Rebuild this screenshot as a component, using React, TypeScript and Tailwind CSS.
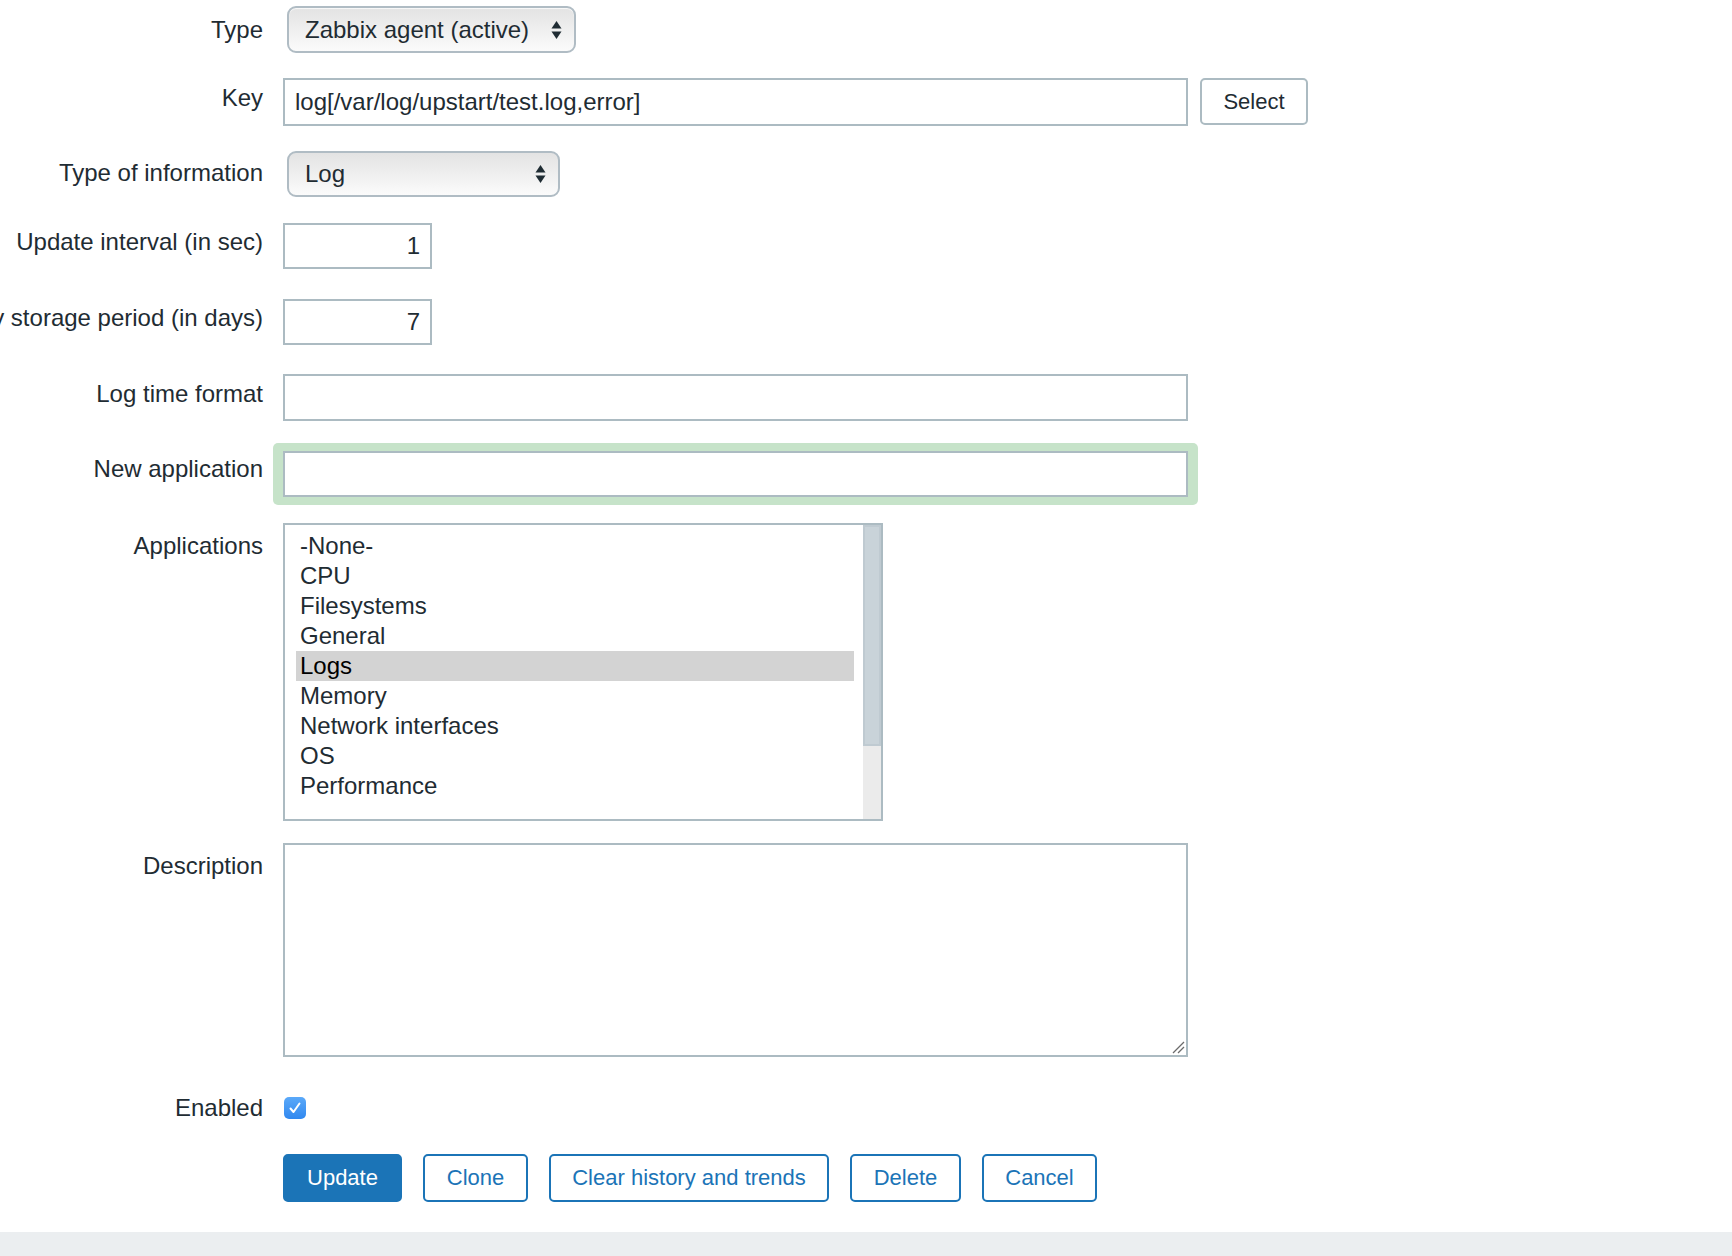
import React from "react";

const Arrows = () => (
  <svg width="11" height="20" viewBox="0 0 11 20" className="shrink-0">
    <path d="M5.5 1 L10.5 8.5 H0.5 Z" fill="#1f2c33" />
    <path d="M5.5 19 L10.5 11.5 H0.5 Z" fill="#1f2c33" />
  </svg>
);

function Row({
  label,
  lp,
  className,
  children,
}: {
  label: string;
  lp: string;
  className: string;
  children: React.ReactNode;
}) {
  return (
    <div className={`flex items-start ${className}`}>
      <div className={`w-[263px] shrink-0 flex justify-end ${lp}`}>
        <span className="whitespace-nowrap text-[24px] leading-[28px]">{label}</span>
      </div>
      <div className="ml-[20px] flex items-start">{children}</div>
    </div>
  );
}

const apps = [
  "-None-",
  "CPU",
  "Filesystems",
  "General",
  "Logs",
  "Memory",
  "Network interfaces",
  "OS",
  "Performance",
];

export default function App() {
  return (
    <div className="min-h-screen flex flex-col bg-white text-[#1f2c33] font-['Liberation_Sans',Arial,sans-serif] overflow-hidden">
      <div className="flex flex-col pt-[6px]">
        <Row label="Type" lp="pt-[10px]" className="">
          <div className="ml-[4px] w-[289px] h-[47px] rounded-[9px] border-2 border-[#b0bcc4] bg-linear-to-b from-[#e3e3e3] to-[#fbfbfb] flex items-center justify-between pl-[16px] pr-[12px] shadow-[inset_0_1px_1px_rgba(255,255,255,0.8)]">
            <span className="text-[24px] leading-[28px] whitespace-nowrap">Zabbix agent (active)</span>
            <Arrows />
          </div>
        </Row>

        <Row label="Key" lp="pt-[6px]" className="mt-[25px]">
          <div className="w-[905px] h-[48px] border-2 border-[#acbbc2] bg-white flex items-center pl-[10px]">
            <span className="text-[24px] leading-[28px] whitespace-nowrap">log[/var/log/upstart/test.log,error]</span>
          </div>
          <div className="ml-[12px] w-[108px] h-[47px] rounded-[5px] border-2 border-[#acbbc2] bg-white flex items-center justify-center">
            <span className="text-[22px] leading-[26px]">Select</span>
          </div>
        </Row>

        <Row label="Type of information" lp="pt-[8px]" className="mt-[25px]">
          <div className="ml-[4px] w-[273px] h-[46px] rounded-[9px] border-2 border-[#b0bcc4] bg-linear-to-b from-[#e3e3e3] to-[#fbfbfb] flex items-center justify-between pl-[16px] pr-[12px]">
            <span className="text-[24px] leading-[28px] whitespace-nowrap">Log</span>
            <Arrows />
          </div>
        </Row>

        <Row label="Update interval (in sec)" lp="pt-[5px]" className="mt-[26px]">
          <div className="w-[149px] h-[46px] border-2 border-[#acbbc2] bg-white flex items-center justify-end pr-[10px]">
            <span className="text-[24px] leading-[28px]">1</span>
          </div>
        </Row>

        <Row label="History storage period (in days)" lp="pt-[5px]" className="mt-[30px]">
          <div className="w-[149px] h-[46px] border-2 border-[#acbbc2] bg-white flex items-center justify-end pr-[10px]">
            <span className="text-[24px] leading-[28px]">7</span>
          </div>
        </Row>

        <Row label="Log time format" lp="pt-[6px]" className="mt-[29px]">
          <div className="w-[905px] h-[47px] border-2 border-[#acbbc2] bg-white" />
        </Row>

        <Row label="New application" lp="pt-[12px]" className="mt-[22px]">
          <div className="-ml-[10px] px-[10px] py-[8px] rounded-[5px] bg-[#c6e3c9]">
            <div className="w-[905px] h-[46px] border-2 border-[#acbbc2] bg-white" />
          </div>
        </Row>

        <Row label="Applications" lp="pt-[9px]" className="mt-[18px]">
          <div className="w-[600px] h-[298px] border-2 border-[#acbbc2] bg-white flex">
            <div className="flex-1 pt-[6px] pl-[11px] pr-[9px] flex flex-col">
              {apps.map((a) => (
                <div
                  key={a}
                  className={`h-[30px] flex items-center pl-[4px] text-[24px] leading-[28px] whitespace-nowrap ${
                    a === "Logs" ? "bg-[#d3d3d3] text-black" : ""
                  }`}
                >
                  {a}
                </div>
              ))}
            </div>
            <div className="w-[18px] bg-[#ebebeb] flex flex-col">
              <div className="h-[221px] bg-[#c9d3d9] border-2 border-[#bfcad1]" />
            </div>
          </div>
        </Row>

        <Row label="Description" lp="pt-[9px]" className="mt-[22px]">
          <div className="relative">
            <textarea
              readOnly
              className="block w-[905px] h-[214px] border-2 border-[#acbbc2] bg-white outline-none resize-none"
            />
            <svg
              width="14"
              height="14"
              viewBox="0 0 14 14"
              className="absolute right-[3px] bottom-[3px]"
            >
              <path d="M13 2 L2 13" stroke="#6b6b6b" strokeWidth="1.3" />
              <path d="M13 7 L7 13" stroke="#6b6b6b" strokeWidth="1.3" />
            </svg>
          </div>
        </Row>

        <div className="mt-[28px] flex items-center h-[46px]">
          <div className="w-[263px] shrink-0 flex justify-end">
            <span className="whitespace-nowrap text-[24px] leading-[28px]">Enabled</span>
          </div>
          <div className="ml-[21px] w-[22px] h-[22px] rounded-[5px] bg-linear-to-b from-[#5aa9f9] to-[#3088ef] flex items-center justify-center">
            <svg width="14" height="14" viewBox="0 0 14 14">
              <path d="M2.5 7.5 L5.5 11 L11.5 2.5" fill="none" stroke="white" strokeWidth="2" strokeLinecap="round" strokeLinejoin="round" />
            </svg>
          </div>
        </div>

        <div className="mt-[23px] flex items-center pl-[283px] gap-[21px]">
          <div className="h-[48px] w-[119px] rounded-[5px] bg-[#1b74b7] border-2 border-[#1b74b7] flex items-center justify-center text-white text-[22px] leading-[26px]">
            Update
          </div>
          <div className="h-[48px] w-[105px] rounded-[5px] bg-white border-2 border-[#1b74b7] flex items-center justify-center text-[#1b74b7] text-[22px] leading-[26px]">
            Clone
          </div>
          <div className="h-[48px] w-[280px] rounded-[5px] bg-white border-2 border-[#1b74b7] flex items-center justify-center text-[#1b74b7] text-[22px] leading-[26px]">
            Clear history and trends
          </div>
          <div className="h-[48px] w-[111px] rounded-[5px] bg-white border-2 border-[#1b74b7] flex items-center justify-center text-[#1b74b7] text-[22px] leading-[26px]">
            Delete
          </div>
          <div className="h-[48px] w-[115px] rounded-[5px] bg-white border-2 border-[#1b74b7] flex items-center justify-center text-[#1b74b7] text-[22px] leading-[26px]">
            Cancel
          </div>
        </div>
      </div>
      <div className="mt-[30px] flex-1 bg-[#ebeef0]" />
    </div>
  );
}
